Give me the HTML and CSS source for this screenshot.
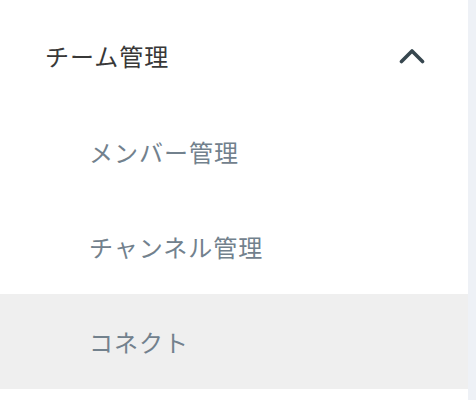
FILE: index.html
```html
<!DOCTYPE html>
<html lang="ja">
<head>
<meta charset="utf-8">
<link rel="stylesheet" href="styles.css">
</head>
<body>
<div class="layout">
  <nav class="sidebar">
    <div class="group-header">
      <span class="group-title">チーム管理</span>
      <svg class="chevron" width="26" height="17" viewBox="0 0 26 17">
        <path d="M2.5 14.5 L13 4 L23.5 14.5" fill="none" stroke="#37474f" stroke-width="3.6" stroke-linecap="round" stroke-linejoin="round"/>
      </svg>
    </div>
    <ul class="items">
      <li class="item">メンバー管理</li>
      <li class="item">チャンネル管理</li>
      <li class="item active">コネクト</li>
    </ul>
  </nav>
  <div class="edge"></div>
</div>
</body>
</html>
```

FILE: styles.css
```css
html, body {
  margin: 0;
  padding: 0;
  background: #ffffff;
}
.layout {
  display: flex;
  width: 476px;
  height: 400px;
}
.sidebar {
  flex: 1;
  font-family: "Noto Sans CJK JP", "Noto Sans", sans-serif;
  font-size: 24px;
  font-weight: 400;
  letter-spacing: 1px;
}
.edge {
  width: 8px;
  background: #eef1f6;
}
.group-header {
  height: 97px;
  padding: 7px 43px 0 45px;
  display: flex;
  align-items: center;
  justify-content: space-between;
}
.group-title {
  color: #383838;
}
.chevron {
  display: block;
  margin-bottom: 1px;
}
.items {
  list-style: none;
  margin: 0;
  padding: 0;
}
.item {
  height: 95px;
  display: flex;
  align-items: center;
  padding-left: 89px;
  color: #72818d;
}
.item.active {
  background: #efefef;
}
```
